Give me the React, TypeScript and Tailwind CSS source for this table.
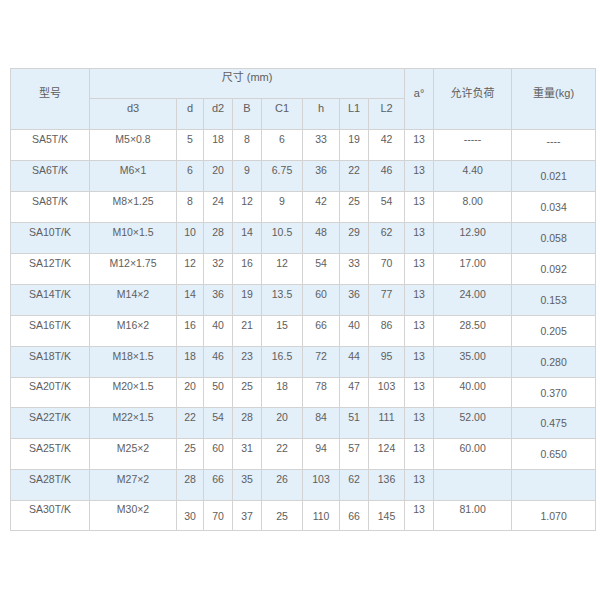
const rows: string[][] = [
  ['SA5T/K', 'M5×0.8', '5', '18', '8', '6', '33', '19', '42', '13', '-----', '----'],
  ['SA6T/K', 'M6×1', '6', '20', '9', '6.75', '36', '22', '46', '13', '4.40', '0.021'],
  ['SA8T/K', 'M8×1.25', '8', '24', '12', '9', '42', '25', '54', '13', '8.00', '0.034'],
  ['SA10T/K', 'M10×1.5', '10', '28', '14', '10.5', '48', '29', '62', '13', '12.90', '0.058'],
  ['SA12T/K', 'M12×1.75', '12', '32', '16', '12', '54', '33', '70', '13', '17.00', '0.092'],
  ['SA14T/K', 'M14×2', '14', '36', '19', '13.5', '60', '36', '77', '13', '24.00', '0.153'],
  ['SA16T/K', 'M16×2', '16', '40', '21', '15', '66', '40', '86', '13', '28.50', '0.205'],
  ['SA18T/K', 'M18×1.5', '18', '46', '23', '16.5', '72', '44', '95', '13', '35.00', '0.280'],
  ['SA20T/K', 'M20×1.5', '20', '50', '25', '18', '78', '47', '103', '13', '40.00', '0.370'],
  ['SA22T/K', 'M22×1.5', '22', '54', '28', '20', '84', '51', '111', '13', '52.00', '0.475'],
  ['SA25T/K', 'M25×2', '25', '60', '31', '22', '94', '57', '124', '13', '60.00', '0.650'],
  ['SA28T/K', 'M27×2', '28', '66', '35', '26', '103', '62', '136', '13', '', ''],
  ['SA30T/K', 'M30×2', '30', '70', '37', '25', '110', '66', '145', '13', '81.00', '1.070'],
]

// column widths in px, measured off the picture
const widths = [79, 87, 27, 29, 29, 41, 37, 29, 36, 29, 78, 84]

const cell = 'border border-[#d3d3d3] text-center align-middle p-0 leading-[14px]'

export default function App() {
  return (
    <div className="w-[600px] h-[600px] bg-white pt-[68px] pl-[10px]">
      <table
        className="table-fixed border-collapse w-[585px] text-[#5e5e5e] text-[10.5px]"
        style={{ fontFamily: '"Liberation Sans", Arial, "Noto Sans CJK SC", sans-serif' }}
      >
        <colgroup>
          {widths.map((w, i) => (
            <col key={i} style={{ width: w }} />
          ))}
        </colgroup>
        <thead className="bg-[#e3eff9] text-[11px]">
          <tr className="h-[30px]">
            <th rowSpan={2} className={`${cell} font-normal pb-[13px]`}>型号</th>
            <th colSpan={8} className={`${cell} font-normal pb-[13px]`}>尺寸 (mm)</th>
            <th rowSpan={2} className={`${cell} font-normal pb-[13px]`}>a°</th>
            <th rowSpan={2} className={`${cell} font-normal pb-[13px]`}>允许负荷</th>
            <th rowSpan={2} className={`${cell} font-normal pb-[13px]`}>重量(kg)</th>
          </tr>
          <tr className="h-[31px]">
            {['d3', 'd', 'd2', 'B', 'C1', 'h', 'L1', 'L2'].map((t) => (
              <th key={t} className={`${cell} font-normal pb-[12px]`}>{t}</th>
            ))}
          </tr>
        </thead>
        <tbody>
          {rows.map((r, ri) => {
            const last = ri === rows.length - 1
            return (
              <tr
                key={r[0]}
                className={`${ri % 2 ? 'bg-[#e3eff9]' : 'bg-white'} ${ri === 8 || ri === 12 ? 'h-[30px]' : 'h-[31px]'}`}
              >
                {r.map((v, ci) => {
                  // most cells sit high in the row; weight column (and last row's sizes) are centred
                  let pad = 'pb-[13px]'
                  if (ci === 11) pad = ri === 0 ? 'pb-[8px]' : 'pb-0'
                  if (last && ci >= 2 && ci <= 8) pad = 'pb-0'
                  return (
                    <td key={ci} className={`${cell} ${pad}`}>{v}</td>
                  )
                })}
              </tr>
            )
          })}
        </tbody>
      </table>
    </div>
  )
}
